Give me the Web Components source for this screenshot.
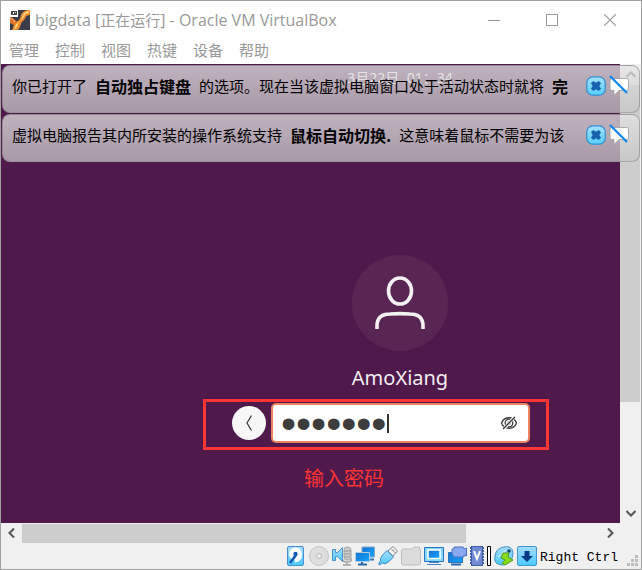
<!DOCTYPE html>
<html lang="zh-CN">
<head>
<meta charset="utf-8">
<title>bigdata [正在运行] - Oracle VM VirtualBox</title>
<style>
html, body { margin: 0; height: 100%; }
body { font-family: "Open Sans", "Noto Sans CJK SC", sans-serif; background: #fff; }
</style>
</head>
<body>
<vm-window></vm-window>
<script>
const define = (name, html) => customElements.define(name, class extends HTMLElement {
  constructor() {
    super();
    const t = document.createElement('template');
    t.innerHTML = html;
    this.attachShadow({ mode: 'open' }).append(t.content.cloneNode(true));
  }
});

define('title-bar', `
<style>
:host { display: flex; align-items: center; height: 38px; padding-left: 9px; color: #999; }
h1 { flex: 1; margin: 0 0 0 5px; font-size: 16px; line-height: 22px; font-weight: 400; white-space: nowrap; }
::slotted(span) { font: 15px/20px "Noto Sans CJK SC", sans-serif; }
button { width: 58px; height: 36px; padding: 0; border: 0; background: none; color: #999; display: grid; place-items: center; }
button:last-child { margin-right: 2px; }
svg { display: block; }
</style>
<svg width="20" height="20" viewBox="0 0 20 20"><rect width="20" height="20" fill="#3a3d49"/><path d="M20 0v5c-5 0-4 4-7 6-3 2-2 6-5 9H2c2-3 1-6 4-8 4-2 4-3 5-7 1-3 4-5 9-5z" fill="#f08c2e"/><path d="M19 1v2c-5 0-5 5-8 7-3 2-3 6-5 9H4c2-4 2-5 5-7 4-3 2-10 10-11z" fill="#ffd78c"/><path d="M0 7c3 1 4 2 7 5l-3 3-4-2z" fill="#e5732a"/><path d="M0 8c3 1 3 2 5 4" stroke="#ffc66e" fill="none"/><path d="M0 0h8v7H0z" fill="#fff"/><path d="M1 1h6v4H1z" fill="#444"/><path d="M3.500 2v2M5.500 2v1" stroke="#fff"/></svg>
<h1><slot></slot></h1>
<button aria-label="最小化"><svg width="12" height="12"><path d="M0 6.500h12" stroke="currentColor"/></svg></button>
<button aria-label="最大化"><svg width="12" height="12"><path d="M.5.5h11v11H.5z" stroke="currentColor" fill="none"/></svg></button>
<button aria-label="关闭"><svg width="12" height="12"><path d="M0 0l12 12M12 0L0 12" stroke="currentColor" stroke-width="1.200"/></svg></button>
`);

define('menu-bar', `
<style>
:host { display: flex; gap: 16px; height: 25px; padding-left: 8px; color: #999; }
button { font: 15px/22px "Noto Sans CJK SC", sans-serif; height: 24px; padding: 0 0 2px; border: 0; background: none; color: inherit; }
</style>
<button>管理</button><button>控制</button><button>视图</button><button>热键</button><button>设备</button><button>帮助</button>
`);

define('notice-bar', `
<style>
:host { display: flex; align-items: center; box-sizing: border-box; padding: 7px 10px 13px 9px; border: 1px solid rgba(120,115,120,.5); border-radius: 8px; background: linear-gradient(rgba(228,228,228,.75), rgba(197,197,197,.75)); font: 15px/26px "Noto Sans CJK SC", sans-serif; color: #000; }
p { flex: 1; min-width: 0; margin: 0 14px 0 0; display: flex; gap: 8px; white-space: nowrap; overflow: hidden; }
::slotted(b) { font-size: 16px; }
button { width: 20px; height: 20px; padding: 0; margin-left: 3px; border: 0; background: none; flex: none; }
svg { display: block; overflow: visible; }
</style>
<p><slot></slot></p>
<button aria-label="关闭"><svg width="20" height="20" viewBox="0 0 20 20"><defs><linearGradient id="g" x2="0" y2="1"><stop stop-color="#a6e0ff"/><stop offset="1" stop-color="#55d0fa"/></linearGradient></defs><rect x=".8" y=".8" width="18.400" height="18.400" rx="6" fill="url(#g)" stroke="#328ed0" stroke-width="1.200"/><path d="M5.500 7.200l1.700-1.700L10 7.200l2.800-1.700 1.700 1.700L12.800 10l1.700 2.800-1.700 1.700-2.800-1.700-2.800 1.700-1.700-1.700L7.200 10z" fill="#1761ae" stroke="#1761ae"/></svg></button>
<button aria-label="不再显示"><svg width="20" height="20" viewBox="0 0 20 20"><path d="M2.500 2.500h15q2 0 2 2v8q0 2-2 2H10l-5 5v-5H3q-2 0-2-2V4z" fill="#fff" stroke="#999" stroke-width=".8"/><path d="M1 0l17 17" stroke="#1287ed" stroke-width="2.300"/></svg></button>
`);

define('password-field', `
<style>
:host { display: flex; align-items: center; gap: 5px; }
button { padding: 0; border: 0; display: grid; place-items: center; flex: none; }
.back { width: 34px; height: 34px; border-radius: 50%; background: #f7f7f7; }
.box { position: relative; flex: 1; display: flex; align-items: center; box-sizing: border-box; height: 40px; padding: 0 10px 0 8px; border: 2px solid #ec825f; border-radius: 5px; background: #fff; }
input { flex: 1; min-width: 0; width: 0; height: 36px; padding: 0; border: 0; outline: 0; background: none; color: #3d3d3d; font: 43px/36px "Liberation Sans", sans-serif; }
i { position: absolute; left: 114px; top: 9px; width: 2px; height: 19px; background: #333; }
.eye { width: 18px; height: 18px; background: none; }
</style>
<button class="back" aria-label="返回"><svg width="16" height="18" viewBox="0 0 16 18"><path d="M10.500 1.500L6 9l4.500 7.500" stroke="#333" stroke-width="1.200" fill="none"/></svg></button>
<div class="box"><input type="password" value="1234567" aria-label="密码"><i></i>
<button class="eye" aria-label="显示密码"><svg width="18" height="18" viewBox="0 0 18 18" fill="none" stroke="#3d3d3d" stroke-width="1.300"><path d="M1.500 9C4 2 14 2 16.500 9 14 16 4 16 1.500 9z"/><circle cx="9" cy="9" r="3.800"/><circle cx="9" cy="9" r="1.200"/><path d="M3.500 15L14.500 3" stroke="#fff" stroke-width="3"/><path d="M3 15L15 3" stroke-width="1.500"/></svg></button></div>
`);

define('guest-screen', `
<style>
:host { display: block; overflow: hidden; background: #4f194b; color: #f2eef1; }
.desk { width: 798px; display: flex; flex-direction: column; align-items: center; }
time { margin-top: 4px; font: 14px/20px "Noto Sans", "Noto Sans CJK SC", sans-serif; white-space: pre; }
.avatar { margin-top: 167px; width: 96px; height: 96px; border-radius: 50%; background: #592653; display: grid; place-items: center; }
h2 { margin: 12px 0 0; font: 400 20px/30px "Noto Sans", sans-serif; }
figure { width: 346px; margin: 6px 48px 0 0; }
.mark { border: 3px solid #fb3434; padding: 1px 16px 4px 26px; }
figcaption { margin-top: 13px; padding-left: 101px; color: #fb3434; font: 20px/30px "Noto Sans CJK SC", sans-serif; }
</style>
<div class="desk">
<time>3月22日  01：34</time>
<div class="avatar"><svg width="50" height="54" viewBox="0 0 50 54" fill="none" stroke="#f2f0f1" stroke-width="3.600"><ellipse cx="25" cy="15" rx="11.500" ry="13"/><path d="M2 53v-3q0-12 13-12 10-.8 20 0 13 0 13 12v3"/></svg></div>
<h2>AmoXiang</h2>
<figure><div class="mark"><password-field></password-field></div><figcaption>输入密码</figcaption></figure>
</div>
`);

define('scroll-track', `
<style>
:host { display: flex; background: #f0f0f0; }
:host([vertical]) { flex-direction: column; }
button { flex: none; width: 21px; height: 20px; padding: 0; border: 0; background: none; display: grid; place-items: center; }
:host([vertical]) button { height: 21px; }
.track { flex: 1; display: flex; }
:host([vertical]) .track { flex-direction: column; }
.thumb { flex: 77; background: #cdcdcd; margin-top: 1px; }
.rest { flex: 23; }
:host([vertical]) .thumb { flex: 76; margin: 0 1px 0 0; }
:host([vertical]) .rest { flex: 24; }
svg { display: block; fill: none; stroke: #555; stroke-width: 2; }
:host([vertical]) svg { transform: rotate(90deg); }
</style>
<button aria-label="后退"><svg width="10" height="10"><path d="M7 .5L2.500 5 7 9.500"/></svg></button>
<div class="track"><div class="thumb"></div><div class="rest"></div></div>
<button aria-label="前进"><svg width="10" height="10"><path d="M3 .5L7.500 5 3 9.500"/></svg></button>
`);

define('status-bar', `
<style>
:host { display: flex; align-items: center; justify-content: flex-end; gap: 3px; height: 26px; padding-right: 3px; background: #f0f0f0; color: #000; }
svg { display: block; flex: none; }
span { padding-top: 3px; font: 13px/20px "Liberation Mono", monospace; white-space: nowrap; }
.grip { margin-left: 6px; align-self: flex-end; }
</style>
<svg width="20" height="20" viewBox="0 0 20 20"><defs><linearGradient id="b" x2="0" y2="1"><stop stop-color="#a5dcff"/><stop offset="1" stop-color="#4bcbff"/></linearGradient><linearGradient id="d" x2="1" y2="1"><stop stop-color="#1672ce"/><stop offset="1" stop-color="#12a6ff"/></linearGradient></defs><rect x="1.500" y=".5" width="16" height="19" rx="1.500" fill="url(#b)" stroke="#4b8fd0"/><circle cx="9.500" cy="8" r="6.500" fill="#fff"/><path d="M4 17l3-4 3-4" stroke="#125bb4" stroke-width="2.600"/><circle cx="9.500" cy="8" r="2.200" fill="#125bb4"/><path d="M9 15.500q5-1 6-5" stroke="#fff" stroke-width="2" fill="none"/></svg>
<svg width="20" height="20" viewBox="0 0 20 20"><circle cx="10" cy="10" r="9.500" fill="#dedede" stroke="#c4c4c4"/><circle cx="10" cy="10" r="2.500" fill="#eee" stroke="#bbb"/></svg>
<svg width="20" height="20" viewBox="0 0 20 20"><rect x="12" y="1" width="7" height="13" rx="3" fill="#ccc" stroke="#aaa"/><path d="M12 5h7M12 8h7M12 11h7" stroke="#999"/><path d="M10 12q0 4 5 4t5-4M15 16v3M11 19h8" stroke="#b2b2b2" stroke-width="2" fill="none"/><path d="M.5 3.500h3v3h2l5-5v14l-5-5h-2v4h-3z" fill="url(#b)" stroke="#4b90cc"/></svg>
<svg width="20" height="20" viewBox="0 0 20 20"><path d="M7 1h12.500v10H7z" fill="url(#d)" stroke="#85a6c7"/><path d="M14 13.500h5" stroke="#3575b2" stroke-width="2"/><path d="M.5 6.500h14v9H.500z" fill="url(#d)" stroke="#b5cce0"/><path d="M7 16v2M3 18.500h9" stroke="#2868ab" stroke-width="2"/></svg>
<svg width="20" height="20" viewBox="0 0 20 20"><path d="M10 5l5-4.500 4.500 4.500-4.500 5z" fill="#f4f4f4" stroke="#888"/><path d="M9 4.500l6.500 6.500-5 5q-4 3-6 1l-3 2-1-1 2-3q-1-2 2-6z" fill="url(#b)" stroke="#438bc6"/><path d="M14 3.500l1.500 1.500M16 5.500l1 1" stroke="#444"/></svg>
<svg width="20" height="20" viewBox="0 0 20 20"><path d="M.5 4l2-1h8l3-2h5v2h1v14q0 2-2 2H2.500q-2 0-2-2z" fill="#dcdcdc" stroke="#bebebe"/></svg>
<svg width="20" height="20" viewBox="0 0 20 20"><path d="M.5 1.500h19v14H.500z" fill="#84d8ff" stroke="#2876bf"/><path d="M4 4h12v8.500H4z" fill="url(#d)" stroke="#fff" stroke-width="1.500"/><path d="M5 16.500h10M3 18.500h14" stroke="#4b83c1"/></svg>
<svg width="20" height="20" viewBox="0 0 20 20"><path d="M1.500 6.500h14v10h-14z" fill="url(#d)" stroke="#2c71b5"/><path d="M4 18.500h10" stroke="#2868ab" stroke-width="2"/><path d="M5 3h2V1h9q1 0 1 2l2.500-1v8L17 9v2H8q-2 0-2-2l-1-1z" fill="#8ba9f1" stroke="#4e73c5"/></svg>
<svg width="14" height="20" viewBox="0 0 14 20"><rect x="1.500" y=".5" width="11" height="19" fill="#718ad5" stroke="#405da8"/><path d="M.5 1v18M13.500 1v18" stroke="#405da8" stroke-dasharray="2 1"/><path d="M4 5l3 8 3-8" fill="none" stroke="#fff" stroke-width="2"/></svg>
<svg width="4" height="20"><path d="M.5.5h3v19h-3z" fill="#fff" stroke="#000"/></svg>
<svg width="20" height="20" viewBox="0 0 20 20"><path d="M1 10Q2 2 10 1q8-2 9 6 0 10-10 12Q-1 19 1 10z" fill="url(#b)" stroke="#4b91c6"/><path d="M4 11l8-7" stroke="#e8faff"/><circle cx="15" cy="5" r="1.800" fill="#174475"/><path d="M9 7h6l-1 4 5 3-8 5-3-2 3-3-4-2z" fill="#88dc1b" stroke="#559b17"/></svg>
<svg width="20" height="20" viewBox="0 0 20 20"><rect x=".5" y=".5" width="19" height="19" rx="1.500" fill="url(#b)" stroke="#4196cf"/><path d="M7.500 5h5v5H16l-6 6-6-6h3.500z" fill="#073a84"/></svg>
<span>Right Ctrl</span>
<svg class="grip" width="11" height="14" viewBox="0 0 11 14"><path d="M8 0h3v3H8zM4 4h3v3H4zM8 4h3v3H8zM0 8h3v3H0zM4 8h3v3H4zM8 8h3v3H8z" fill="#bdbdbd"/></svg>
`);

define('vm-window', `
<style>
:host { display: flex; flex-direction: column; box-sizing: border-box; min-height: 100vh; border: 1px solid #a0a0a0; background: #fff; }
.body { position: relative; flex: 1; display: grid; grid-template: 1fr 20px / minmax(0, 1fr) 21px; background: #f0f0f0; }
.side { grid-row: 1; grid-column: 2; }
.bottom { grid-row: 2; grid-column: 1; }
.notices { position: absolute; left: 1px; right: 1px; top: 1px; display: grid; grid-template-columns: minmax(0, 1fr); gap: 1px; }
</style>
<title-bar>bigdata [<span>正在运行</span>] - Oracle VM VirtualBox</title-bar>
<menu-bar></menu-bar>
<div class="body">
<guest-screen></guest-screen>
<scroll-track class="side" vertical></scroll-track>
<scroll-track class="bottom"></scroll-track>
<div class="notices">
<notice-bar><span>你已打开了</span><b>自动独占键盘</b><span>的选项。现在当该虚拟电脑窗口处于活动状态时就将</span><b>完</b></notice-bar>
<notice-bar><span>虚拟电脑报告其内所安装的操作系统支持</span><b>鼠标自动切换.</b><span>这意味着鼠标不需要为该</span></notice-bar>
</div>
</div>
<status-bar></status-bar>
`);
</script>
</body>
</html>
